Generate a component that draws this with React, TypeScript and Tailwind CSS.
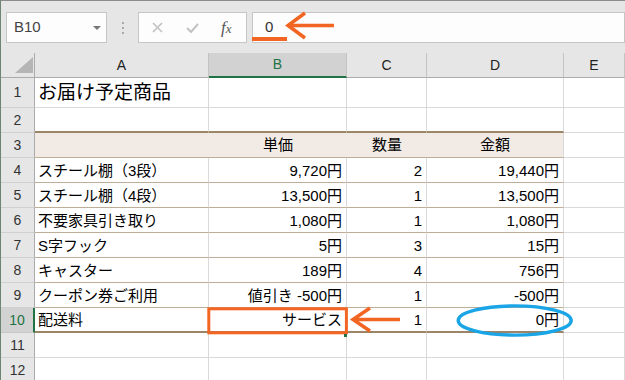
import React from 'react';

// Excel-like sheet: 配送料 row with annotation marks

type BodyRow = { n: number; a: string; b: string; c: string; d: string };

const body: BodyRow[] = [
  { n: 4, a: 'スチール棚（3段）', b: '9,720円', c: '2', d: '19,440円' },
  { n: 5, a: 'スチール棚（4段）', b: '13,500円', c: '1', d: '13,500円' },
  { n: 6, a: '不要家具引き取り', b: '1,080円', c: '1', d: '1,080円' },
  { n: 7, a: 'S字フック', b: '5円', c: '3', d: '15円' },
  { n: 8, a: 'キャスター', b: '189円', c: '4', d: '756円' },
  { n: 9, a: 'クーポン券ご利用', b: '値引き -500円', c: '1', d: '-500円' },
  { n: 10, a: '配送料', b: 'サービス', c: '1', d: '0円' },
];

const rowGrid = 'grid grid-cols-[34px_174px_138px_80px_137px_1fr]';
const cell = 'border-r border-b border-[#d9d9d9] flex items-center leading-none text-[15px] text-black';

function RowHead({ n, active }: { n: number; active?: boolean }) {
  return (
    <div
      className={
        active
          ? 'flex items-center justify-center bg-[#d2d2d2] border-r-2 border-r-[#217346] border-b border-b-[#c8c8c8] text-[14px] text-[#217346]'
          : 'flex items-center justify-center bg-[#e6e6e6] border-r border-r-[#ababab] border-b border-b-[#d0d0d0] text-[14px] text-[#333]'
      }
    >
      {n}
    </div>
  );
}

function Toolbar() {
  return (
    <div className="h-[52px] bg-[#e6e6e6] flex items-start pt-[11px]">
      <div className="ml-[5px] w-[101px] h-[31px] bg-[#fdfdfd] border border-[#c6c6c6] flex items-center justify-between pl-[7px] pr-[5px]">
        <span className="text-[15px] text-[#444]">B10</span>
        <span className="w-0 h-0 border-l-[4px] border-r-[4px] border-t-[4px] border-l-transparent border-r-transparent border-t-[#777]" />
      </div>
      <div className="w-[31px] h-[31px] flex flex-col items-center justify-center gap-[3px]">
        <span className="w-[2px] h-[2px] bg-[#a8a8a8]" />
        <span className="w-[2px] h-[2px] bg-[#a8a8a8]" />
        <span className="w-[2px] h-[2px] bg-[#a8a8a8]" />
      </div>
      <div className="w-[109px] h-[31px] bg-[#fdfdfd] border border-[#c6c6c6] flex items-center pl-[13px]">
        <svg width="11" height="11" viewBox="0 0 11 11">
          <path d="M1 1L10 10M10 1L1 10" stroke="#c2c2c2" strokeWidth="1.6" fill="none" />
        </svg>
        <svg className="ml-[23px]" width="13" height="10" viewBox="0 0 13 10">
          <path d="M1 5L5 9L12 1" stroke="#c2c2c2" strokeWidth="2" fill="none" />
        </svg>
        <span className="ml-[22px] font-['Liberation_Serif',serif] italic text-[17px] text-[#555] leading-none">
          f<span className="text-[13px]">x</span>
        </span>
      </div>
      <div className="ml-[5px] flex-1 h-[31px] bg-[#fcfdfc] border border-[#c6c6c6] flex items-center pl-[12px]">
        <span className="text-[15px] text-[#333]">0</span>
      </div>
    </div>
  );
}

function ColumnHeads() {
  const base = 'flex items-center justify-center border-r border-b text-[14px]';
  return (
    <div className={`${rowGrid} h-[25px]`}>
      <div className="bg-[#e6e6e6] border-r border-b border-r-[#ababab] border-b-[#ababab] relative">
        <svg className="absolute left-[14px] top-[4px]" width="18" height="16" viewBox="0 0 18 16">
          <polygon points="18,0 18,16 0,16" fill="#b5b5b5" />
        </svg>
      </div>
      <div className={`${base} bg-[#e6e6e6] border-r-[#c4c4c4] border-b-[#ababab] text-[#222]`}>A</div>
      <div className={`${base} bg-[#d2d2d2] border-r-[#c4c4c4] border-b-2 border-b-[#217346] text-[#217346]`}>B</div>
      <div className={`${base} bg-[#e6e6e6] border-r-[#c4c4c4] border-b-[#ababab] text-[#222]`}>C</div>
      <div className={`${base} bg-[#e6e6e6] border-r-[#c4c4c4] border-b-[#ababab] text-[#222]`}>D</div>
      <div className={`${base} bg-[#e6e6e6] border-r-[#c4c4c4] border-b-[#ababab] text-[#222]`}>E</div>
    </div>
  );
}

function Marks() {
  const orange = '#f26522';
  return (
    <svg className="absolute -left-px -top-px pointer-events-none" width="625" height="380" viewBox="0 0 625 380">
      {/* formula bar */}
      <rect x="252" y="37" width="35" height="4" fill={orange} />
      <path d="M289 25.5H334" stroke={orange} strokeWidth="3.5" fill="none" />
      <path d="M305 13L288 25.5L305 38" stroke={orange} strokeWidth="3.5" fill="none" />
      {/* B10 */}
      <rect x="208.8" y="308.8" width="137.6" height="24" stroke={orange} strokeWidth="3" fill="none" />
      <rect x="344" y="334" width="3" height="3" fill="#217346" />
      <path d="M355 319.5H400" stroke={orange} strokeWidth="3.5" fill="none" />
      <path d="M370 308L353 319.5L370 331" stroke={orange} strokeWidth="3.5" fill="none" />
      {/* D10 */}
      <ellipse cx="514.7" cy="320.5" rx="56.5" ry="14.6" stroke="#1aa5e6" strokeWidth="3.4" fill="none" />
    </svg>
  );
}

export default function App() {
  return (
    <div className="w-[625px] h-[380px] relative overflow-hidden bg-white border-l border-t border-l-[#6f8572] border-t-[#8c8c8c] font-['Liberation_Sans','Noto_Sans_CJK_JP',sans-serif]">
      <Toolbar />
      <ColumnHeads />

      {/* row 1 */}
      <div className={`${rowGrid} h-[30px]`}>
        <RowHead n={1} />
        <div className={`${cell} pl-[3px] text-[19px] overflow-visible whitespace-nowrap`}>お届け予定商品</div>
        <div className={cell} />
        <div className={cell} />
        <div className={cell} />
        <div className={cell} />
      </div>

      {/* row 2 */}
      <div className={`${rowGrid} h-[25px]`}>
        <RowHead n={2} />
        <div className="border-r border-r-[#d9d9d9] border-b-2 border-b-[#9c8466]" />
        <div className="border-r border-r-[#d9d9d9] border-b-2 border-b-[#9c8466]" />
        <div className="border-r border-r-[#d9d9d9] border-b-2 border-b-[#9c8466]" />
        <div className="border-r border-r-[#d9d9d9] border-b-2 border-b-[#9c8466]" />
        <div className={cell} />
      </div>

      {/* row 3 header */}
      <div className={`${rowGrid} h-[25px]`}>
        <RowHead n={3} />
        <div className="bg-[#f2ebe5] border-b border-b-[#bfae97]" />
        <div className="bg-[#f2ebe5] border-b border-b-[#bfae97] flex items-center justify-center text-[15px]">単価</div>
        <div className="bg-[#f2ebe5] border-b border-b-[#bfae97] flex items-center justify-center text-[15px]">数量</div>
        <div className="bg-[#f2ebe5] border-r border-r-[#d9d9d9] border-b border-b-[#bfae97] flex items-center justify-center text-[15px]">金額</div>
        <div className={cell} />
      </div>

      {body.map((r) => {
        const last = r.n === 10;
        const tb = last
          ? 'border-r border-r-[#d9d9d9] border-b-2 border-b-[#9c8466] flex items-center leading-none text-[15px] text-black'
          : 'border-r border-r-[#d9d9d9] border-b border-b-[#bfae97] flex items-center leading-none text-[15px] text-black';
        return (
          <div key={r.n} className={`${rowGrid} h-[25px]`}>
            <RowHead n={r.n} active={last} />
            <div className={`${tb} pl-[3px] whitespace-nowrap`}>{r.a}</div>
            <div className={`${tb} justify-end pr-[4px] whitespace-nowrap`}>{r.b}</div>
            <div className={`${tb} justify-end pr-[4px]`}>{r.c}</div>
            <div className={`${tb} justify-end pr-[4px]`}>{r.d}</div>
            <div className={cell} />
          </div>
        );
      })}

      {[11, 12].map((n) => (
        <div key={n} className={`${rowGrid} h-[25px]`}>
          <RowHead n={n} />
          <div className={cell} />
          <div className={cell} />
          <div className={cell} />
          <div className={cell} />
          <div className={cell} />
        </div>
      ))}

      <Marks />
    </div>
  );
}
